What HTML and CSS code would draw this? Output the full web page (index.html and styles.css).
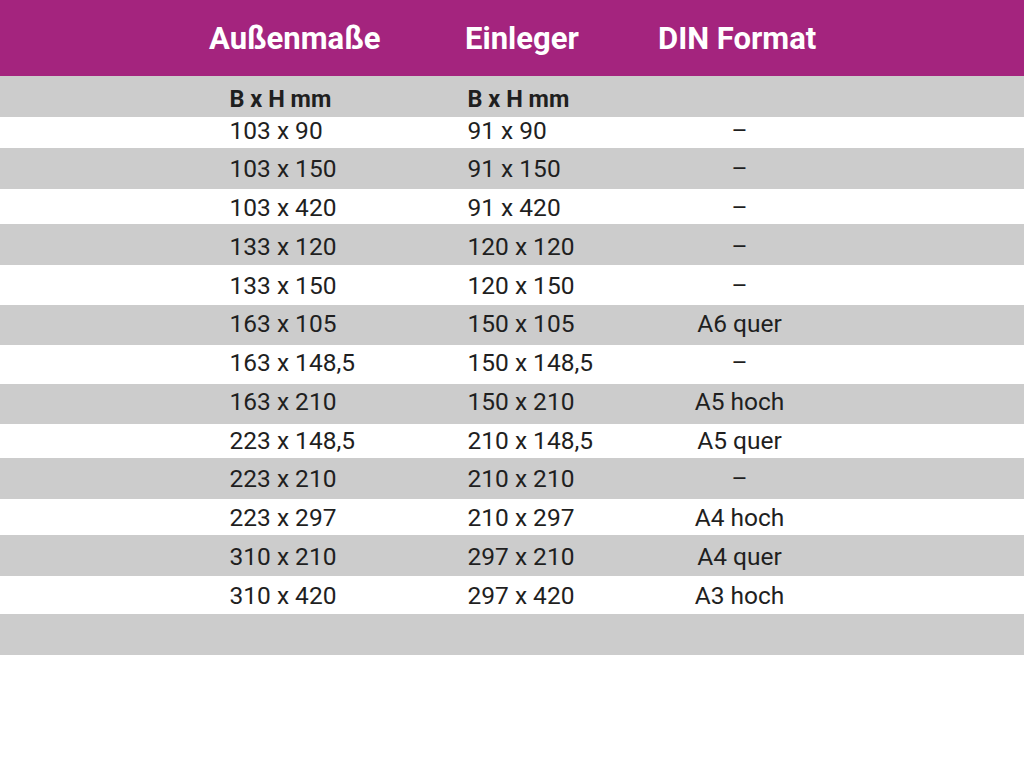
FILE: index.html
```html
<!DOCTYPE html>
<html lang="de">
<head>
<meta charset="utf-8">
<title>Formate</title>
<link rel="stylesheet" href="styles.css">
</head>
<body>
<div class="table">
  <div class="head">
    <div class="hcell">Außenmaße</div>
    <div class="hcell">Einleger</div>
    <div class="hcell">DIN Format</div>
  </div>
  <div class="stack">
    <div class="bands">
      <div class="band grey"></div>
      <div class="band"></div>
      <div class="band grey"></div>
      <div class="band"></div>
      <div class="band grey"></div>
      <div class="band"></div>
      <div class="band grey"></div>
      <div class="band"></div>
      <div class="band grey"></div>
      <div class="band"></div>
      <div class="band grey"></div>
      <div class="band"></div>
      <div class="band grey"></div>
      <div class="band"></div>
      <div class="band grey"></div>
    </div>
    <div class="rows">
      <div class="row sub"><span>B x H mm</span><span>B x H mm</span><span></span></div>
      <div class="row"><span>103 x 90</span><span>91 x 90</span><span class="din">–</span></div>
      <div class="row"><span>103 x 150</span><span>91 x 150</span><span class="din">–</span></div>
      <div class="row"><span>103 x 420</span><span>91 x 420</span><span class="din">–</span></div>
      <div class="row"><span>133 x 120</span><span>120 x 120</span><span class="din">–</span></div>
      <div class="row"><span>133 x 150</span><span>120 x 150</span><span class="din">–</span></div>
      <div class="row"><span>163 x 105</span><span>150 x 105</span><span class="din">A6 quer</span></div>
      <div class="row"><span>163 x 148,5</span><span>150 x 148,5</span><span class="din">–</span></div>
      <div class="row"><span>163 x 210</span><span>150 x 210</span><span class="din">A5 hoch</span></div>
      <div class="row"><span>223 x 148,5</span><span>210 x 148,5</span><span class="din">A5 quer</span></div>
      <div class="row"><span>223 x 210</span><span>210 x 210</span><span class="din">–</span></div>
      <div class="row"><span>223 x 297</span><span>210 x 297</span><span class="din">A4 hoch</span></div>
      <div class="row"><span>310 x 210</span><span>297 x 210</span><span class="din">A4 quer</span></div>
      <div class="row"><span>310 x 420</span><span>297 x 420</span><span class="din">A3 hoch</span></div>
    </div>
  </div>
</div>
</body>
</html>
```

FILE: styles.css
```css
html, body {
  margin: 0;
  padding: 0;
  background: #ffffff;
}

body {
  font-family: Roboto, "Liberation Sans", sans-serif;
  color: #1f1f1f;
  width: 1024px;
  height: 768px;
  overflow: hidden;
}

.head {
  height: 76px;
  box-sizing: border-box;
  padding-top: 2px;
  background: #a4247e;
  display: grid;
  grid-template-columns: 256px 193px auto;
  align-items: center;
  padding-left: 209px;
  color: #ffffff;
  font-weight: 700;
  font-size: 31px;
  line-height: 36px;
}

.stack {
  display: grid;
}

.stack > .bands,
.stack > .rows {
  grid-area: 1 / 1;
}

.bands {
  display: flex;
  flex-direction: column;
}

.band {
  height: 40px;
  background: #ffffff;
}

.band.grey {
  background: #cccccc;
}

.band:nth-child(1) { height: 41px; }
.band:nth-child(2) { height: 31px; }
.band:nth-child(3) { height: 41px; }
.band:nth-child(4) { height: 35px; }
.band:nth-child(5) { height: 41px; }
.band:nth-child(6) { height: 40px; }
.band:nth-child(7) { height: 40px; }
.band:nth-child(8) { height: 39px; }
.band:nth-child(9) { height: 40px; }
.band:nth-child(10) { height: 34px; }
.band:nth-child(11) { height: 41px; }
.band:nth-child(12) { height: 36px; }
.band:nth-child(13) { height: 41px; }
.band:nth-child(14) { height: 38px; }
.band:nth-child(15) { height: 41px; }

.rows {
  display: flex;
  flex-direction: column;
}

.row {
  display: grid;
  grid-template-columns: 238px 192px 160px;
  padding-left: 229.5px;
  height: 38.75px;
  font-size: 24.5px;
  line-height: 39.5px;
  white-space: nowrap;
}

.row.sub {
  height: 34.7px;
  padding-top: 12px;
  box-sizing: border-box;
  font-size: 23.5px;
  font-weight: 700;
  line-height: 22.7px;
}

.din {
  text-align: center;
}
```
